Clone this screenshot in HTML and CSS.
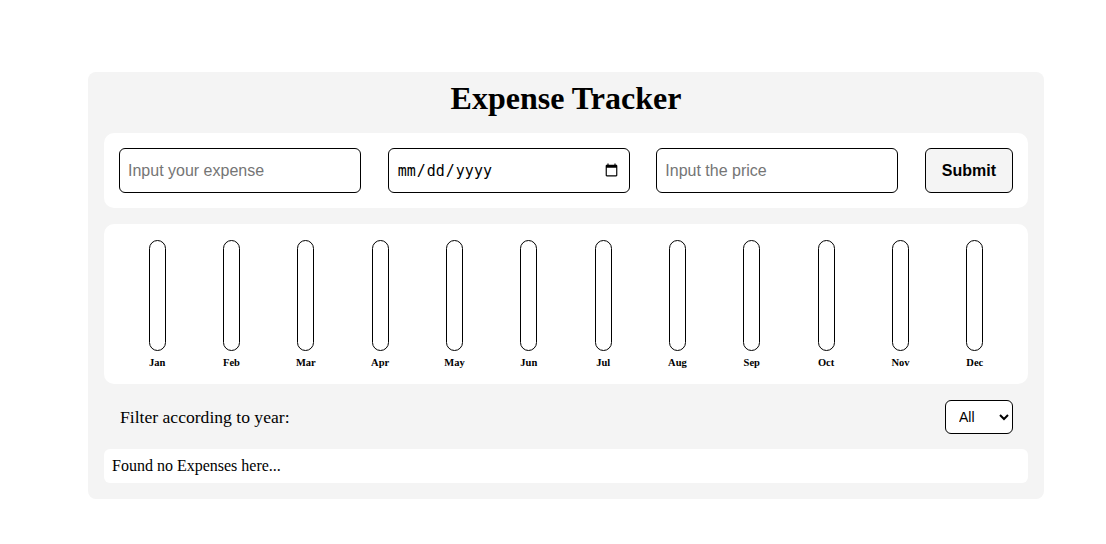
FILE: index.html
```html
<!DOCTYPE html>
<html>
<head>
<meta charset="utf-8">
<link rel="stylesheet" href="styles.css">
</head>
<body>
<div class="card">
  <h1 class="title">Expense Tracker</h1>
  <form class="form-box">
    <input class="field" type="text" placeholder="Input your expense">
    <input class="field date" type="date">
    <input class="field" type="text" placeholder="Input the price">
    <button class="submit" type="button">Submit</button>
  </form>
  <div class="chart">
    <div class="month"><div class="bar"></div><span class="label">Jan</span></div>
    <div class="month"><div class="bar"></div><span class="label">Feb</span></div>
    <div class="month"><div class="bar"></div><span class="label">Mar</span></div>
    <div class="month"><div class="bar"></div><span class="label">Apr</span></div>
    <div class="month"><div class="bar"></div><span class="label">May</span></div>
    <div class="month"><div class="bar"></div><span class="label">Jun</span></div>
    <div class="month"><div class="bar"></div><span class="label">Jul</span></div>
    <div class="month"><div class="bar"></div><span class="label">Aug</span></div>
    <div class="month"><div class="bar"></div><span class="label">Sep</span></div>
    <div class="month"><div class="bar"></div><span class="label">Oct</span></div>
    <div class="month"><div class="bar"></div><span class="label">Nov</span></div>
    <div class="month"><div class="bar"></div><span class="label">Dec</span></div>
  </div>
  <div class="filter">
    <span class="filter-text">Filter according to year:</span>
    <select class="year">
      <option>All</option>
    </select>
  </div>
  <div class="empty">Found no Expenses here...</div>
</div>
</body>
</html>
```
FILE: styles.css
```css
html, body {
  margin: 0;
  padding: 0;
  background: #ffffff;
  font-family: "Liberation Serif", "Times New Roman", serif;
  color: #000;
}

.card {
  box-sizing: border-box;
  width: 956px;
  margin: 72px 0 0 88px;
  padding: 8px 16px 16px;
  background: #f4f4f4;
  border-radius: 8px;
  display: flex;
  flex-direction: column;
}

.title {
  margin: 0 0 16px;
  font-size: 32px;
  line-height: 37px;
  font-weight: bold;
  text-align: center;
}

.form-box {
  margin: 0;
  background: #fff;
  border-radius: 10px;
  padding: 15px;
  display: flex;
  justify-content: space-between;
  align-items: center;
}

.field {
  box-sizing: border-box;
  width: 242px;
  height: 45px;
  padding: 0 8px;
  border: 1px solid #000;
  border-radius: 6px;
  background: #fff;
  font-family: "Liberation Sans", Arial, sans-serif;
  font-size: 16px;
  color: #000;
  outline: none;
}

.field::placeholder {
  color: #757575;
}

.date {
  font-family: "DejaVu Sans Mono", monospace;
  font-size: 15px;
}

.submit {
  box-sizing: border-box;
  width: 88px;
  height: 45px;
  border: 1px solid #000;
  border-radius: 6px;
  background: #f4f4f4;
  font-family: "Liberation Sans", Arial, sans-serif;
  font-size: 16px;
  font-weight: bold;
  color: #000;
}

.chart {
  margin-top: 16px;
  background: #fff;
  border-radius: 10px;
  padding: 16px 16px 15px;
  display: flex;
}

.month {
  flex: 1;
  display: flex;
  flex-direction: column;
  align-items: center;
}

.bar {
  box-sizing: border-box;
  width: 17px;
  height: 111px;
  border: 1px solid #000;
  border-radius: 9px;
  background: #fff;
}

.label {
  margin-top: 6px;
  font-size: 10.5px;
  font-weight: bold;
  line-height: 12px;
}

.filter {
  display: flex;
  justify-content: space-between;
  align-items: center;
  padding: 16px 15px 15px 16px;
}

.filter-text {
  font-size: 17.6px;
}

.year {
  box-sizing: border-box;
  width: 68px;
  height: 34px;
  padding: 0 6px 0 9px;
  border: 1px solid #000;
  border-radius: 6px;
  background: #fff;
  font-family: "Liberation Sans", Arial, sans-serif;
  font-size: 14px;
  color: #000;
}

.empty {
  background: #fff;
  border-radius: 6px;
  padding: 0 8px;
  height: 34px;
  line-height: 34px;
  font-size: 16px;
}
```
